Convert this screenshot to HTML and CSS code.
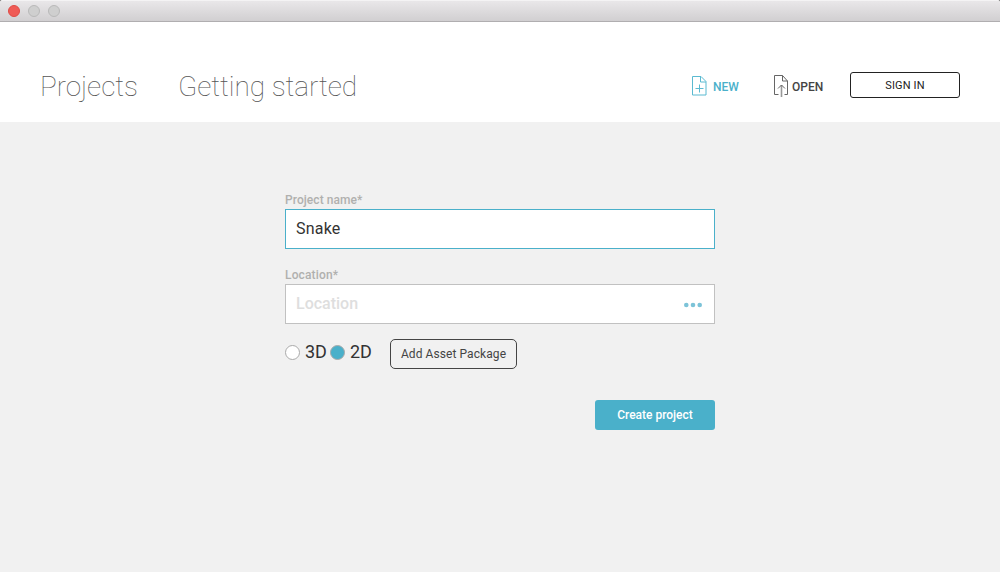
FILE: index.html
```html
<!DOCTYPE html>
<html lang="en">
<head>
<meta charset="utf-8">
<title>Projects</title>
<link rel="stylesheet" href="styles.css">
</head>
<body>
<div class="window">
  <div class="titlebar"><span class="light light-close"></span><span class="light"></span><span class="light"></span></div>
  <header class="header">
    <nav class="tabs">
      <a class="tab tab-projects">Projects</a>
      <a class="tab tab-start">Getting started</a>
    </nav>
    <div class="actions">
      <a class="action action-new">
        <svg class="file-icon" width="15" height="22" viewBox="0 0 15 22"><path d="M.5 1.500h8.500l5 5v13.500H.5zM8.500 1.500v5.500h5.500M3.500 13.500h8M7.500 9.500v8"/></svg>
        <span class="new-label">NEW</span>
      </a>
      <a class="action action-open">
        <svg class="file-icon" width="15" height="24" viewBox="0 0 15 24"><path d="M4.500 20.500H.5V1.500h8l5 5.500v13.500H10.500M8.500 1.500v5.500h5"/><path class="arrow" d="M7.500 11v12"/><path d="M4 14.500l3.500-3.500 3.500 3.500"/></svg>
        <span class="open-label">OPEN</span>
      </a>
      <button class="signin"><span class="signin-label">SIGN IN</span></button>
    </div>
  </header>
  <main class="main">
    <form class="form">
      <label class="label label-name">Project name*</label>
      <div class="field field-active"><span class="value">Snake</span></div>
      <label class="label label-location">Location*</label>
      <div class="field"><span class="placeholder">Location</span><svg class="dots" width="18" height="6" viewBox="0 0 18 6"><circle cx="2.300" cy="3" r="2.300"/><circle cx="9" cy="3" r="2.300"/><circle cx="15.700" cy="3" r="2.300"/></svg></div>
      <div class="options">
        <span class="radio"></span><span class="mode">3D</span>
        <span class="radio radio-on"></span><span class="mode">2D</span>
        <button type="button" class="package"><span class="package-label">Add Asset Package</span></button>
      </div>
      <button type="button" class="create"><span class="create-label">Create project</span></button>
    </form>
  </main>
</div>
</body>
</html>
```
FILE: styles.css
```css
* { box-sizing: border-box; }
body { margin: 0; background: #777; font-family: Roboto, "Liberation Sans", sans-serif; color: #333; }
.window { display: flex; flex-direction: column; width: 1000px; height: 572px; overflow: hidden; border-radius: 3px 3px 0 0; background: #fff; }
.titlebar { display: flex; align-items: center; gap: 8px; flex: none; height: 22px; padding-left: 8px; background: linear-gradient(#e9e7e9, #d1cfd1); border-top: 1px solid #f4f3f4; border-bottom: 1px solid #b0aeb0; }
.light { width: 12px; height: 12px; border: 1px solid #b9b9b9; border-radius: 50%; background: #cfcfcf; }
.light-close { border-color: #df4b45; background: #ef5b56; }
.header { display: flex; justify-content: space-between; flex: none; height: 100px; padding: 0 40px; }
.tabs { display: flex; gap: 41px; padding-top: 47px; }
.tab { font-size: 28px; line-height: 36px; font-weight: 100; letter-spacing: -.07px; color: #555; white-space: nowrap; }
.tab-projects { width: 97px; }
.actions { display: flex; align-items: flex-start; padding-top: 50px; }
.action { display: flex; align-items: flex-start; font-size: 12px; line-height: 14px; font-weight: 500; }
.action-new { width: 81px; margin-right: 1px; padding-top: 3px; gap: 6px; color: #4ab0ca; }
.action-open { width: 76px; padding-top: 2px; gap: 3px; color: #444; }
.new-label { padding-top: 5px; }
.open-label { padding-top: 6px; }
.file-icon { flex: none; fill: none; stroke: #5bbad1; stroke-width: 1; }
.action-open .file-icon { stroke: #666; }
.action-open .arrow { stroke: #999; stroke-width: 1.6; }
.signin { display: flex; align-items: center; justify-content: center; width: 110px; height: 26px; padding: 1px 0 0; border: 1px solid #222; border-radius: 3px; background: #fff; font: 400 11px/14px Roboto, sans-serif; letter-spacing: .15px; color: #222; }
.signin-label { padding-top: 1px; }
.main { flex: 1; background: #f1f1f1; }
.form { display: flex; flex-direction: column; width: 430px; margin: 70px 0 0 285px; }
.label { height: 17px; font-size: 12px; line-height: 16px; font-weight: 500; letter-spacing: .07px; color: #b0b0ae; }
.label-location { margin-top: 18px; letter-spacing: .15px; }
.field { display: flex; align-items: center; justify-content: space-between; height: 40px; padding: 0 12px 0 10px; border: 1px solid #c1c1c1; background: #fff; font-size: 16px; line-height: 20px; }
.field-active { border-color: #4ab0ca; }
.value { letter-spacing: .2px; }
.placeholder { font-weight: 500; color: #dedede; }
.dots { fill: #7cc3d8; margin-top: 2px; }
.options { display: flex; align-items: center; height: 30px; margin-top: 15px; }
.radio { width: 15px; height: 15px; margin: -3px 5px 0 0; border: 1px solid #aaa; border-radius: 50%; background: #fff; }
.radio-on { background: #4ab0ca; }
.mode { width: 25px; margin-top: -4px; font-size: 18px; line-height: 22px; white-space: nowrap; }
.package { width: 127px; height: 30px; margin-left: 15px; padding: 0; border: 1px solid #444; border-radius: 5px; background: #f1f1f1; font: 400 12px/14px Roboto, sans-serif; letter-spacing: .08px; color: #444; }
.create { align-self: flex-end; width: 120px; height: 30px; margin-top: 31px; padding: 0; border: 0; border-radius: 3px; background: #4ab0ca; font: 500 12px/14px Roboto, sans-serif; color: #fff; }
```
